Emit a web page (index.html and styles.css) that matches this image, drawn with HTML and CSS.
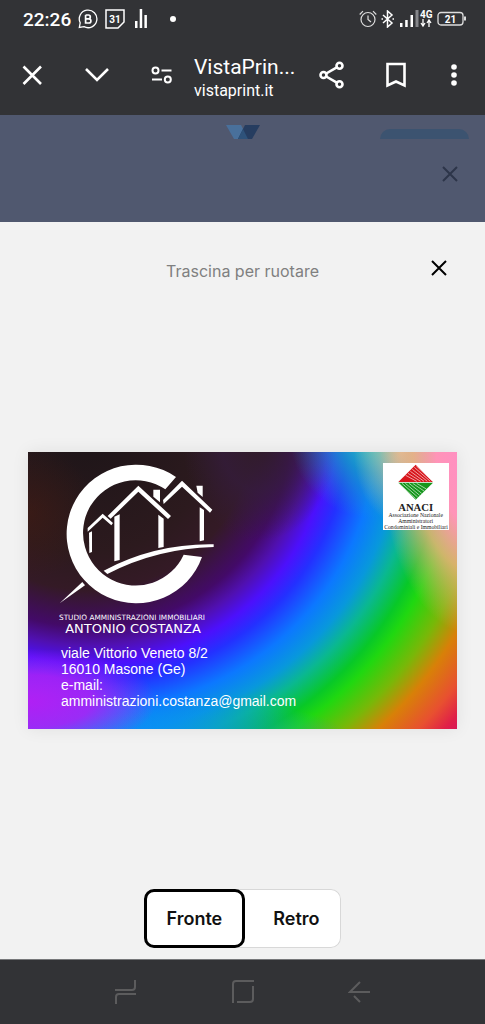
FILE: index.html
```html
<!DOCTYPE html>
<html lang="it">
<head>
  <meta charset="UTF-8">
  <meta name="viewport" content="width=device-width, initial-scale=1">
  <title>VistaPrint</title>
  <link rel="stylesheet" href="styles.css">
</head>
<body>
  <header class="browser">
    <div class="status">
      <span class="time">22:26</span>
      <svg width="20" height="20" viewBox="0 0 20 20" fill="none" stroke="#fff" stroke-width="1.3">
        <path d="M1.3 18.5 L2.2 13.8 A8.8 8.8 0 1 1 6 17.7 Z"/>
        <path d="M7.6 6 V14 H10.8 A2.1 2.1 0 0 0 10.8 9.8 H7.6 M7.6 6 H10.4 A1.9 1.9 0 0 1 10.4 9.8" stroke-width="1.7"/>
      </svg>
      <svg width="20" height="20" viewBox="0 0 20 20">
        <path d="M1 1 H19 V13 L13 19 H1 Z" fill="none" stroke="#fff" stroke-width="1.5"/>
        <text x="10" y="13.5" class="day">31</text>
      </svg>
      <svg class="bars" width="12" height="20" viewBox="0 0 12 20" fill="#fff">
        <path d="M0 12h2.500v7H0zM4.700 0h2.500v19h-2.500zM9.400 6h2.500v13H9.400z"/>
      </svg>
      <span class="dot"></span>
      <svg class="alarm" width="18" height="18" viewBox="0 0 18 18" fill="none" stroke="#ddd" stroke-width="1.2">
        <circle cx="9" cy="9.500" r="7"/>
        <path d="M9 5.500V9.500L12 12M.7 4.500L4 1.200M14 1.200L17.300 4.500"/>
      </svg>
      <svg width="14" height="18" viewBox="0 0 14 18" fill="none" stroke="#fff" stroke-width="1.5">
        <path d="M2 5L11 13L6.500 17V1L11 5L2 13M.5 9H2M11.500 9H13"/>
      </svg>
      <svg class="signal" width="34" height="20" viewBox="0 0 34 20" fill="#fff">
        <path d="M0 14h2.500v4H0zM5.200 11h2.500v7H5.200zM10.500 6h2.500v12h-2.500z"/>
        <path d="M15.500 1h3v17h-3z" fill="#85868a"/>
        <text x="20" y="8.500" class="net">4G</text>
        <path d="M23 10v6M21 14l2 3l2-3M29 18v-6M27 14l2-3l2 3" fill="none" stroke="#fff" stroke-width="1.300"/>
      </svg>
      <svg width="30" height="16" viewBox="0 0 30 16">
        <rect x="1" y="1.500" width="25" height="12.500" rx="3" fill="none" stroke="#ddd" stroke-width="1.300"/>
        <path d="M27 5.500h2v4h-2z" fill="#ddd"/>
        <text x="13.500" y="11.500" class="day">21</text>
      </svg>
    </div>
    <div class="toolbar">
      <button aria-label="Chiudi scheda">
        <svg width="24" height="24" viewBox="0 0 24 24"><path d="M3.500 3.500L21 21M21 3.500L3.500 21"/></svg>
      </button>
      <button aria-label="Riduci">
        <svg width="24" height="24" viewBox="0 0 24 24"><path d="M1 6L12 17L23 6"/></svg>
      </button>
      <button aria-label="Informazioni sul sito">
        <svg class="tune" width="24" height="24" viewBox="0 0 24 24">
          <circle cx="5.500" cy="7.500" r="3"/><circle cx="17.800" cy="16.500" r="3"/>
          <path d="M11.500 7.500H21.500M2 16.500H12"/>
        </svg>
      </button>
      <div class="site">
        <div class="site-title">VistaPrin...</div>
        <div class="site-url">vistaprint.it</div>
      </div>
      <button aria-label="Condividi">
        <svg width="26" height="28" viewBox="0 0 26 28">
          <circle cx="4.500" cy="14" r="3"/><circle cx="20.500" cy="4.700" r="3"/><circle cx="20.500" cy="23.300" r="3"/>
          <path d="M7.200 12.500L17.800 6.300M7.200 15.500L17.800 21.700"/>
        </svg>
      </button>
      <button class="save" aria-label="Aggiungi ai preferiti">
        <svg width="24" height="26" viewBox="0 0 24 26"><path d="M3.500 2H20.500V23.500L12 19.500L3.500 23.500Z"/></svg>
      </button>
      <button class="more" aria-label="Altro">
        <svg width="24" height="26" viewBox="0 0 24 26"><g fill="#fff" stroke="none"><circle cx="12" cy="5" r="2.800"/><circle cx="12" cy="13" r="2.800"/><circle cx="12" cy="21" r="2.800"/></g></svg>
      </button>
    </div>
  </header>

  <div class="backdrop">
    <div class="page-top">
      <svg class="brand-mark" width="34" height="14" viewBox="0 0 34 14">
        <path d="M0 0H15L22 14H8Z" fill="#49709b"/>
        <path d="M19 0H34L26 14H12Z" fill="#263d60"/>
        <path d="M17 4L22 14H12Z" fill="#2e527a"/>
      </svg>
      <span class="pill"></span>
    </div>
    <button class="panel-close" aria-label="Chiudi pannello">
      <svg width="20" height="20" viewBox="0 0 20 20"><path d="M3 3L17 17M17 3L3 17"/></svg>
    </button>
  </div>

  <main class="sheet">
    <div class="sheet-head">
      <span class="hint">Trascina per ruotare</span>
      <button class="sheet-close" aria-label="Chiudi">
        <svg width="20" height="20" viewBox="0 0 20 20"><path d="M3 3L17 17M17 3L3 17"/></svg>
      </button>
    </div>

    <div class="stage">
      <article class="card">
        <div class="owner">
          <svg class="logo" width="160" height="176" viewBox="110 50 480 528" fill="#fff">
            <path d="M467 95A209 208 0 1 0 545 335L490 328A158 158 0 1 1 435 132Z"/>
            <path d="M118 474L186 410L194 420Z"/>
            <path d="M250 376Q405 294 580 297V305Q410 309 261 386Z"/>
            <path d="M202 248L247 205L278 233L273 240L247 217L202 259Z"/>
            <path d="M206 262L215 258V320L207 323Z"/>
            <path d="M262 212L354 121L452 212L443 221L354 139L271 220Z"/>
            <path d="M282 214L298 207V344L282 348Z"/>
            <path d="M399 133H419V171L399 154Z"/>
            <path d="M414 208L430 220V305L414 308Z"/>
            <path d="M428 164L485 106L576 193L569 202L485 124L430 176Z"/>
            <path d="M528 121H547V155L532 142Z"/>
            <path d="M538 186L551 194V285L538 288Z"/>
            <text x="335" y="523" class="firm">STUDIO AMMINISTRAZIONI IMMOBILIARI</text>
            <text x="338" y="563" class="name">ANTONIO COSTANZA</text>
          </svg>
          <address>
            viale Vittorio Veneto 8/2<br>
            16010 Masone (Ge)<br>
            e-mail:<br>
            amministrazioni.costanza@gmail.com
          </address>
        </div>
        <svg class="badge" width="66" height="67" viewBox="0 0 198 201">
          <path d="M98 5L150 57H46Z" fill="#d8161c"/>
          <path d="M46 59H150L98 110Z" fill="#16961c"/>
          <path d="M100 9L149 55M94 13L142 55M88 19L133 55M82 25L123 55M75 31L113 55M68 37L101 55" stroke="#fff" opacity=".6"/>
          <path d="M47 61L98 107M57 61L104 102M67 61L110 97M78 61L116 91M89 61L123 84M101 61L130 78" stroke="#fff" opacity=".6"/>
          <text x="98" y="143" class="badge-name">ANACI</text>
          <text x="98" y="162">Associazione Nazionale</text>
          <text x="98" y="180">Amministratori</text>
          <text x="99" y="197">Condominiali e Immobiliari</text>
        </svg>
      </article>
    </div>

    <div class="sides">
      <button class="side active" aria-pressed="true">Fronte</button>
      <button class="side" aria-pressed="false">Retro</button>
    </div>
  </main>

  <nav class="system">
    <button aria-label="App recenti">
      <svg width="24" height="26" viewBox="0 0 24 26"><path d="M1 11H18Q21 11 21 8V1M22 15H5Q2 15 2 18V25"/></svg>
    </button>
    <button aria-label="Home">
      <svg width="24" height="26" viewBox="0 0 24 26"><path d="M2 24V5Q2 2 5 2H23M22 7V20Q22 23 19 23H6"/></svg>
    </button>
    <button aria-label="Indietro">
      <svg width="24" height="26" viewBox="0 0 24 26"><path d="M22 13H2L12 3M6 17L12 23"/></svg>
    </button>
  </nav>
</body>
</html>
```

FILE: styles.css
```css
* {
  box-sizing: border-box;
}

body {
  margin: 0;
  min-height: 100vh;
  display: flex;
  flex-direction: column;
  background: #f2f2f2;
  font-family: Inter, sans-serif;
}

button {
  padding: 0;
  border: none;
  background: none;
  cursor: pointer;
}

svg {
  display: block;
  flex-shrink: 0;
}

/* browser bars */
.browser {
  background: #323336;
  color: #fff;
  font-family: Roboto, sans-serif;
}

.status {
  display: flex;
  align-items: center;
  gap: 7px;
  height: 38px;
  padding: 0 18px 0 23px;
}

.time {
  font-size: 19px;
  font-weight: 500;
}

.day {
  font: 700 10px Roboto, sans-serif;
  fill: #fff;
  text-anchor: middle;
}

.net {
  font: 700 10px Roboto, sans-serif;
  fill: #fff;
}

.bars {
  margin-left: 3px;
}

.dot {
  width: 6px;
  height: 6px;
  margin-left: 16px;
  border-radius: 50%;
  background: #fff;
}

.alarm {
  margin: 0 -3px 0 auto;
}

.signal {
  margin: 0 -4px 0 -2px;
}

.toolbar {
  display: flex;
  align-items: center;
  gap: 41px;
  height: 77px;
  padding: 0 19px 3px 20px;
}

.toolbar svg {
  fill: none;
  stroke: #fff;
  stroke-width: 2.6;
}

.toolbar .tune {
  stroke-width: 2;
}

.site {
  flex: 1;
  min-width: 0;
  margin: 6px -21px 0;
  white-space: nowrap;
}

.site-title {
  font-size: 21px;
  line-height: 26px;
}

.site-url {
  font-size: 16px;
  line-height: 22px;
}

.save {
  margin-left: -2px;
}

.more {
  margin-left: -7px;
}

/* dimmed page behind the sheet */
.backdrop {
  height: 107px;
  background: #50586f;
}

.page-top {
  position: relative;
  display: flex;
  justify-content: center;
  align-items: flex-end;
  height: 24px;
}

.pill {
  position: absolute;
  right: 16px;
  bottom: 0;
  width: 89px;
  height: 10px;
  border-radius: 10px 10px 0 0;
  background: #3c5370;
}

.panel-close {
  display: block;
  margin: 25px 25px 0 auto;
}

.panel-close svg {
  stroke: #2d3549;
  stroke-width: 2;
}

/* preview sheet */
.sheet {
  flex: 1;
  display: flex;
  flex-direction: column;
  padding-bottom: 11px;
  background: #f2f2f2;
}

.sheet-head {
  display: grid;
  grid-template-columns: 1fr auto 1fr;
  align-items: start;
  height: 70px;
  padding: 36px 36px 0;
}

.hint {
  grid-column: 2;
  color: #808080;
  font-size: 16px;
  line-height: 26px;
}

.sheet-close {
  justify-self: end;
}

.sheet-close svg {
  stroke: #000;
  stroke-width: 2;
}

.stage {
  flex: 1;
  display: flex;
  align-items: center;
  padding: 0 28px;
}

.card {
  flex: 1;
  display: flex;
  justify-content: space-between;
  align-items: flex-start;
  aspect-ratio: 428 / 276;
  padding: 10px 8px 0 29px;
  color: #fff;
  background:
    radial-gradient(ellipse 22% 66% at 104% 0%, #ff8cc8 0%, #ff94b8 40%, rgba(245, 175, 130, 0.8) 65%, rgba(200, 200, 100, 0) 100%),
    radial-gradient(ellipse 11% 26% at 87% 0%, rgba(255, 200, 150, 0.8) 0%, rgba(160, 200, 160, 0) 100%),
    radial-gradient(ellipse 20% 30% at 81% -6%, rgba(50, 210, 185, 0.95) 0%, rgba(20, 170, 190, 0.7) 45%, rgba(10, 120, 230, 0) 100%),
    radial-gradient(ellipse 30% 19% at 0% 90%, #b020f4 0%, rgba(175, 30, 245, 0.85) 50%, rgba(90, 40, 255, 0) 100%),
    radial-gradient(ellipse 50% 16% at 26% 104%, rgba(10, 140, 255, 0.95) 0%, rgba(20, 120, 255, 0) 100%),
    radial-gradient(ellipse 30% 30% at 0% 104%, rgba(90, 90, 255, 0.9) 0%, rgba(40, 50, 255, 0) 100%),
    radial-gradient(ellipse 18% 36% at 54% -4%, rgba(48, 28, 40, 0.95) 0%, rgba(52, 28, 60, 0.75) 50%, rgba(60, 25, 90, 0) 100%),
    radial-gradient(ellipse 16% 24% at 0% 22%, rgba(72, 28, 16, 0.5) 0%, rgba(60, 25, 20, 0) 100%),
    radial-gradient(ellipse 112% 167% at 14% -7%, #1d1518 0%, #2c1a1e 26%, #341a26 34%, #430a68 42%, #5010b0 46%, #4c10fc 50%, #2430ff 54%, #0c78ff 60%, #0898dc 65%, #0ab890 69%, #08c828 74%, #20d810 77%, #78b808 83%, #d88008 88%, #e85030 94%, #e02048 98%, #d81858 100%);
  box-shadow: 0 0 16px rgba(0, 0, 0, 0.08);
}

.firm,
.name {
  font-family: "DejaVu Sans", sans-serif;
  text-anchor: middle;
}

.firm {
  font-size: 22px;
}

.name {
  font-size: 39px;
}

.owner address {
  margin: 7px 0 0 4px;
  font: normal 14px/16px "Liberation Sans", sans-serif;
  white-space: nowrap;
}

.badge {
  margin-top: 1px;
  background: #fff;
  fill: #222;
  stroke-width: 3;
  font-family: "Liberation Serif", serif;
  font-size: 17px;
  text-anchor: middle;
}

.badge-name {
  font-size: 32px;
  font-weight: 700;
}

.sides {
  display: flex;
  align-self: center;
  border-radius: 10px;
  background: #fff;
  box-shadow: inset 0 0 0 1px #d8d8d8;
}

.side {
  height: 59px;
  padding: 0 22px 0 28px;
  color: #111;
  font: 600 18px Inter, sans-serif;
}

.side.active {
  padding: 0 20px;
  border: 3px solid #000;
  border-radius: 10px;
}

/* system navigation */
.system {
  display: flex;
  justify-content: center;
  gap: 93px;
  height: 65px;
  border-top: 1px solid #77787a;
  background: #323336;
}

.system svg {
  fill: none;
  stroke: #5c5c5d;
  stroke-width: 2;
}
```
